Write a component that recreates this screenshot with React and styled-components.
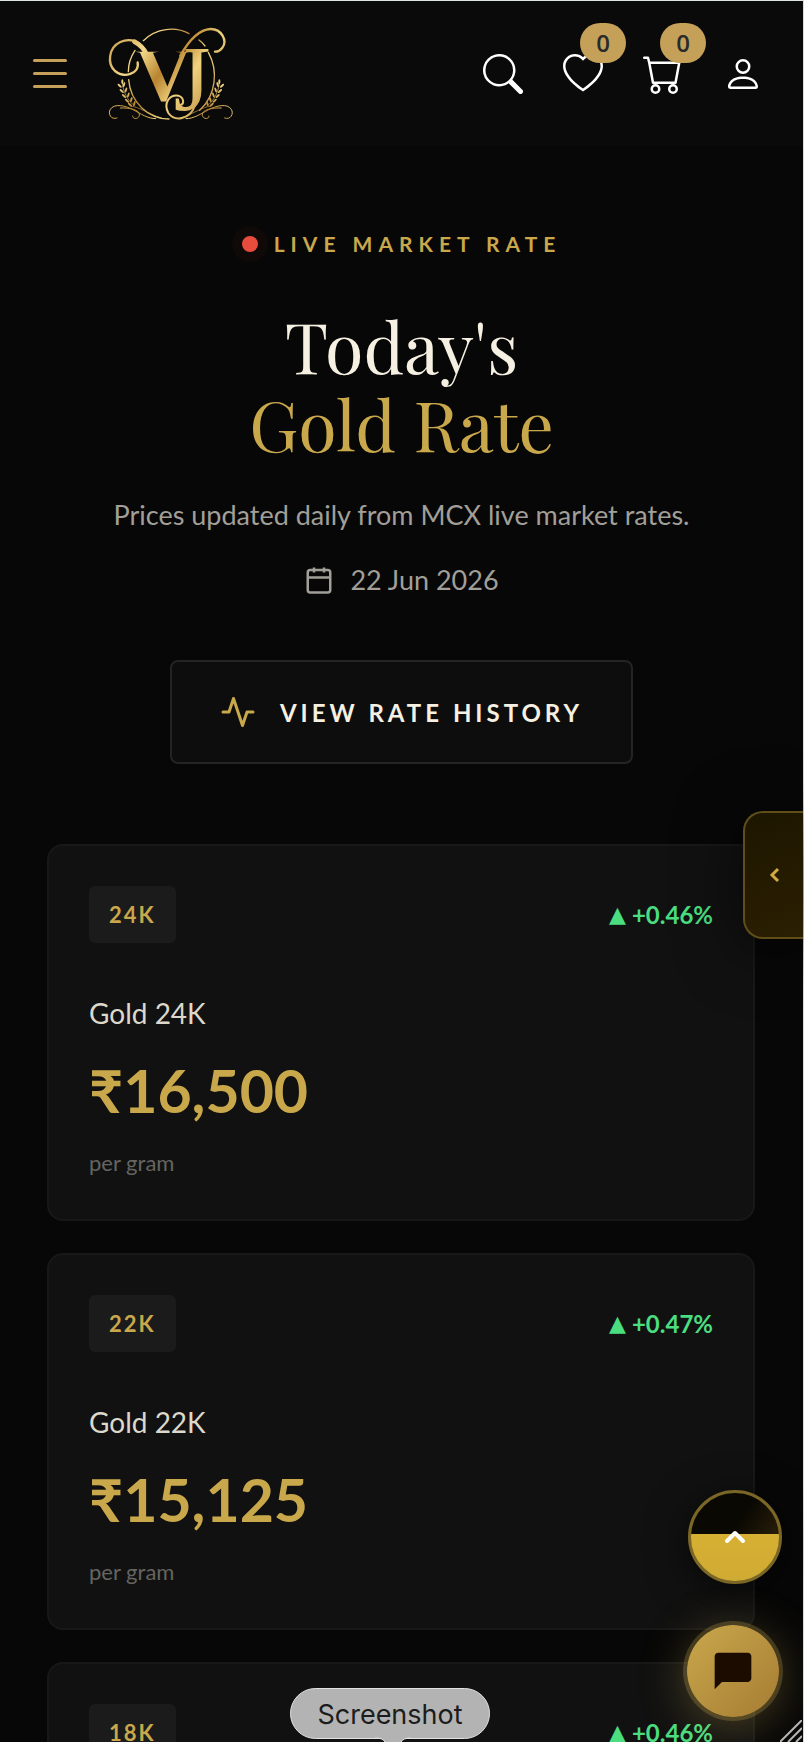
import React from 'react';
import styled, { createGlobalStyle } from 'styled-components';
import { BsSearch, BsHeart, BsCart, BsPerson } from 'react-icons/bs';

const GlobalStyle = createGlobalStyle`
  * {
    box-sizing: border-box;
  }

  body {
    margin: 0;
    background: #070707;
    color: #f5f0e1;
    font-family: Lato, 'Liberation Sans', sans-serif;
  }

  button {
    font-family: inherit;
    cursor: pointer;
  }
`;

const Page = styled.div`
  height: 100vh;
  overflow: hidden;
  border-top: 1px solid #dfe5e0;
  border-right: 1px solid #d9dbd9;
`;

const Header = styled.header`
  display: flex;
  align-items: center;
  justify-content: space-between;
  height: 145px;
  padding: 0 40px 0 33px;
  background: #0a0a0a;
`;

const HeaderSide = styled.div`
  display: flex;
  align-items: center;
  gap: 40px;
`;

const MenuButton = styled.button`
  display: flex;
  flex-direction: column;
  gap: 10px;
  width: 34px;
  padding: 0;
  border: 0;
  background: none;
`;

const MenuBar = styled.span`
  height: 3px;
  border-radius: 2px;
  background: #c5a059;
`;

const LogoLink = styled.a`
  display: block;
  line-height: 0;
`;

const IconButton = styled.button`
  position: relative;
  width: 40px;
  height: 40px;
  padding: 0;
  border: 0;
  background: none;
  color: #ffffff;
  line-height: 0;
`;

const CountBadge = styled.span`
  position: absolute;
  top: -31px;
  left: 17px;
  width: 46px;
  height: 40px;
  border-radius: 20px;
  background: #c5a059;
  color: #2a2a2a;
  font-family: 'Open Sans', sans-serif;
  font-size: 24px;
  font-weight: 600;
  line-height: 40px;
  text-align: center;
`;

const Hero = styled.section`
  display: flex;
  flex-direction: column;
  align-items: center;
  padding: 84px 40px 80px;
  text-align: center;
`;

const LiveLabel = styled.div`
  display: flex;
  align-items: center;
  gap: 16px;
  color: #c9a84c;
  font-size: 21px;
  font-weight: 700;
  letter-spacing: 6px;
  line-height: 28px;
`;

const LiveDot = styled.span`
  width: 16px;
  height: 16px;
  border-radius: 50%;
  background: #e74c3c;
  box-shadow: 0 0 0 10px rgba(231, 76, 60, 0.04);
`;

const Title = styled.h1`
  margin: 48px 0 0;
  font-family: 'Playfair Display', 'Liberation Serif', serif;
  font-size: 70px;
  font-weight: 400;
  line-height: 78px;
`;

const TitleAccent = styled.span`
  display: block;
  color: #c9a84c;
`;

const Subtitle = styled.p`
  margin: 32px 0 0;
  color: #a19f98;
  font-size: 27px;
  line-height: 42px;
`;

const DateRow = styled.div`
  display: flex;
  align-items: center;
  gap: 16px;
  margin-top: 24px;
  color: #a19f98;
  font-size: 27px;
  line-height: 40px;
`;

const HistoryButton = styled.button`
  display: flex;
  align-items: center;
  gap: 24px;
  height: 104px;
  margin-top: 60px;
  padding: 0 48px;
  border: 2px solid #242424;
  border-radius: 8px;
  background: #0d0d0d;
  color: #f5f0e1;
  font-size: 24px;
  font-weight: 700;
  letter-spacing: 4px;
`;

const RateList = styled.main`
  display: flex;
  flex-direction: column;
  gap: 32px;
  padding: 0 48px 0 47px;
`;

const RateCard = styled.article`
  padding: 40px;
  border: 2px solid #181818;
  border-radius: 16px;
  background: #111111;
`;

const CardTop = styled.div`
  display: flex;
  align-items: center;
  justify-content: space-between;
  margin-bottom: 48px;
`;

const Karat = styled.span`
  padding: 0 20px;
  border-radius: 6px;
  background: #1b1b1b;
  color: #c9a84c;
  font-size: 22px;
  font-weight: 700;
  letter-spacing: 2px;
  line-height: 57px;
`;

const Change = styled.span`
  display: flex;
  align-items: center;
  gap: 6px;
  color: #4ade80;
  font-size: 24px;
  font-weight: 700;
  line-height: 32px;
`;

const Arrow = styled.span`
  font-family: 'DejaVu Sans', sans-serif;
  font-size: 22px;
  font-weight: 400;
`;

const CardName = styled.h2`
  margin: 0;
  color: #dcd8cc;
  font-size: 28px;
  font-weight: 400;
  line-height: 44px;
`;

const Price = styled.div`
  margin-top: 16px;
  color: #c9a84c;
  font-size: 59px;
  font-weight: 700;
  line-height: 80px;
`;

const Unit = styled.div`
  margin-top: 16px;
  color: #656460;
  font-size: 22px;
  line-height: 32px;
`;

const SideTab = styled.button`
  position: fixed;
  top: 811px;
  right: 1px;
  display: flex;
  align-items: center;
  justify-content: center;
  width: 60px;
  height: 128px;
  padding: 0;
  border: 2px solid #604e19;
  border-right: 0;
  border-radius: 20px 0 0 20px;
  background: linear-gradient(160deg, #1d1600, #2b1f02);
  color: #d4a843;
  box-shadow: 0 8px 64px rgba(0, 0, 0, 0.6);
`;

const FloatingButton = styled.button`
  position: fixed;
  display: flex;
  align-items: center;
  justify-content: center;
  padding: 0;
  border-radius: 50%;
`;

const TopButton = styled(FloatingButton)`
  right: 22px;
  bottom: 158px;
  width: 94px;
  height: 94px;
  border: 3px solid #7b6725;
  background:
    linear-gradient(to bottom, transparent 47%, #d6b032 47%, #d0ab34 100%),
    linear-gradient(125deg, #0a0803 45%, #261c08 75%, #0c0a04 100%);
  color: #ffffff;
  box-shadow: 0 8px 40px rgba(0, 0, 0, 0.6);
`;

const ChatButton = styled(FloatingButton)`
  right: 25px;
  bottom: 25px;
  width: 92px;
  height: 92px;
  border: 0;
  background: linear-gradient(135deg, #c9a84c, #a67c33);
  color: #1c0c00;
  box-shadow:
    0 0 0 4px rgba(201, 168, 76, 0.25),
    0 8px 48px rgba(201, 168, 76, 0.35);
`;

const Tooltip = styled.div`
  position: fixed;
  bottom: 3px;
  left: 290px;
  width: 200px;
  height: 51px;
  border: 1px solid #e2e2e2;
  border-radius: 26px;
  background: #b3b3b3;
  color: #1c1c1c;
  font-family: Inter, sans-serif;
  font-size: 27px;
  line-height: 51px;
  text-align: center;
`;

const TooltipTail = styled.svg`
  position: absolute;
  top: 48px;
  left: 84px;
`;

const ResizeGrip = styled.svg`
  position: fixed;
  right: 2px;
  bottom: 0;
`;

const rates = [
  { karat: '24K', change: '+0.46%', price: '₹16,500' },
  { karat: '22K', change: '+0.47%', price: '₹15,125' },
  { karat: '18K', change: '+0.46%', price: '₹12,375' },
];

const leaves = [
  [66, 196],
  [72, 212],
  [79, 227],
  [88, 241],
  [97, 253],
];

const Sprig = () => (
  <g>
    <path d="M68 182 C68 210 82 240 106 258" strokeWidth="2" />
    <ellipse cx="68" cy="184" rx="3" ry="7" fill="url(#gold)" stroke="none" />
    {leaves.map(([x, y]) => (
      <g key={y} fill="url(#gold)" stroke="none">
        <ellipse cx={x - 6} cy={y} rx="3" ry="8" transform={`rotate(-48 ${x - 6} ${y})`} />
        <ellipse cx={x + 7} cy={y - 3} rx="3" ry="8" transform={`rotate(18 ${x + 7} ${y - 3})`} />
      </g>
    ))}
    <path d="M52 293 C34 300 24 280 32 267 C44 248 78 256 100 268 C124 281 145 295 168 295" strokeWidth="3" />
    <path d="M62 263 C90 262 122 268 119 285 C116 298 98 297 99 287" strokeWidth="3" />
    <path d="M95 258 C120 260 140 278 185 293" strokeWidth="2" />
  </g>
);

const Logo = () => (
  <svg width="128" height="97" viewBox="22 14 384 291" fill="none" stroke="url(#gold)" strokeLinecap="round">
    <defs>
      <linearGradient id="gold" x1="0" y1="0" x2="420" y2="315" gradientUnits="userSpaceOnUse">
        <stop offset="0.1" stopColor="#c99a48" />
        <stop offset="0.3" stopColor="#f3d88a" />
        <stop offset="0.46" stopColor="#b8842f" />
        <stop offset="0.6" stopColor="#f0d27e" />
        <stop offset="0.85" stopColor="#b98a3c" />
      </linearGradient>
      <clipPath id="stems">
        <rect x="90" y="94" width="168" height="200" />
        <rect x="258" y="70" width="100" height="230" />
      </clipPath>
    </defs>
    <path d="M131 61 C170 22 228 18 268 40" strokeWidth="4" />
    <path d="M298 59 Q308 66 316 77" strokeWidth="4" />
    <path d="M326 96 C356 150 350 225 300 270" strokeWidth="4" />
    <path d="M106 90 Q86 120 86 154" strokeWidth="4" />
    <path d="M87 178 C92 245 145 296 208 296" strokeWidth="4" />
    <text fontFamily="Liberation Serif, serif" fill="url(#gold)" stroke="none" clipPath="url(#stems)">
      <tspan x="106" y="240" fontSize="236" fontWeight="700">
        V
      </tspan>
      <tspan x="222" y="268" fontSize="282">
        J
      </tspan>
    </text>
    <path d="M142 100 C124 62 92 52 62 65 C26 82 22 130 46 152 C72 174 120 162 114 126" strokeWidth="7" />
    <path d="M142 104 C132 82 120 72 104 64" strokeWidth="14" />
    <path d="M242 106 C270 56 300 28 332 26 C366 25 384 62 368 82 Q358 95 346 94" strokeWidth="7" />
    <path d="M286 256 C270 298 226 306 206 278 C190 248 210 222 236 226 C254 232 254 252 242 254" strokeWidth="6" />
    <Sprig />
    <g transform="translate(427 0) scale(-1 1)">
      <Sprig />
    </g>
  </svg>
);

const CalendarIcon = () => (
  <svg width="30" height="30" viewBox="0 0 24 24" fill="none" stroke="currentColor" strokeWidth="2">
    <rect x="3" y="4" width="18" height="18" rx="2" />
    <path d="M16 2v4M8 2v4M3 10h18" />
  </svg>
);

const ActivityIcon = () => (
  <svg
    width="36"
    height="36"
    viewBox="0 0 24 24"
    fill="none"
    stroke="#c9a84c"
    strokeWidth="2"
    strokeLinecap="round"
    strokeLinejoin="round"
  >
    <polyline points="22 12 18 12 15 21 9 3 6 12 2 12" />
  </svg>
);

const App = () => {
  return (
    <Page>
      <GlobalStyle />
      <Header>
        <HeaderSide>
          <MenuButton aria-label="Menu">
            <MenuBar />
            <MenuBar />
            <MenuBar />
          </MenuButton>
          <LogoLink href="#home" aria-label="Home">
            <Logo />
          </LogoLink>
        </HeaderSide>
        <HeaderSide>
          <IconButton aria-label="Search">
            <BsSearch size={40} />
          </IconButton>
          <IconButton aria-label="Wishlist">
            <BsHeart size={40} />
            <CountBadge>0</CountBadge>
          </IconButton>
          <IconButton aria-label="Cart">
            <BsCart size={40} />
            <CountBadge>0</CountBadge>
          </IconButton>
          <IconButton aria-label="Account">
            <BsPerson size={40} />
          </IconButton>
        </HeaderSide>
      </Header>

      <Hero>
        <LiveLabel>
          <LiveDot />
          LIVE MARKET RATE
        </LiveLabel>
        <Title>
          Today's
          <TitleAccent>Gold Rate</TitleAccent>
        </Title>
        <Subtitle>Prices updated daily from MCX live market rates.</Subtitle>
        <DateRow>
          <CalendarIcon />
          22 Jun 2026
        </DateRow>
        <HistoryButton>
          <ActivityIcon />
          VIEW RATE HISTORY
        </HistoryButton>
      </Hero>

      <RateList>
        {rates.map((rate) => (
          <RateCard key={rate.karat}>
            <CardTop>
              <Karat>{rate.karat}</Karat>
              <Change>
                <Arrow>▲</Arrow>
                {rate.change}
              </Change>
            </CardTop>
            <CardName>Gold {rate.karat}</CardName>
            <Price>{rate.price}</Price>
            <Unit>per gram</Unit>
          </RateCard>
        ))}
      </RateList>

      <SideTab aria-label="Open panel">
        <svg width="14" height="18" viewBox="0 0 14 18" fill="none" stroke="currentColor" strokeWidth="3">
          <path d="M11 3L5 9l6 6" />
        </svg>
      </SideTab>

      <TopButton aria-label="Back to top">
        <svg
          width="24"
          height="16"
          viewBox="0 0 24 16"
          fill="none"
          stroke="currentColor"
          strokeWidth="4"
          strokeLinecap="round"
          strokeLinejoin="round"
        >
          <path d="M4 12l8-8 8 8" />
        </svg>
      </TopButton>

      <ChatButton aria-label="Chat">
        <svg width="44" height="44" viewBox="0 0 24 24" fill="currentColor">
          <path d="M20 2H4c-1.100 0-2 .9-2 2v18l4-4h14c1.100 0 2-.9 2-2V4c0-1.100-.9-2-2-2z" />
        </svg>
      </ChatButton>

      <Tooltip role="tooltip">
        Screenshot
        <TooltipTail width="36" height="5" viewBox="0 0 36 5">
          <path d="M0 0h36q-8 1-10 5H10Q8 1 0 0z" fill="#b3b3b3" />
          <path d="M0 1q8 0 10 4M36 1q-8 0-10 4" fill="none" stroke="#e2e2e2" />
        </TooltipTail>
      </Tooltip>

      <ResizeGrip width="22" height="22" viewBox="0 0 22 22" stroke="#b5b5b5" strokeWidth="2">
        <path d="M0 22L22 0M8 22L22 8M16 22l6-6" />
      </ResizeGrip>
    </Page>
  );
};

export default App;
